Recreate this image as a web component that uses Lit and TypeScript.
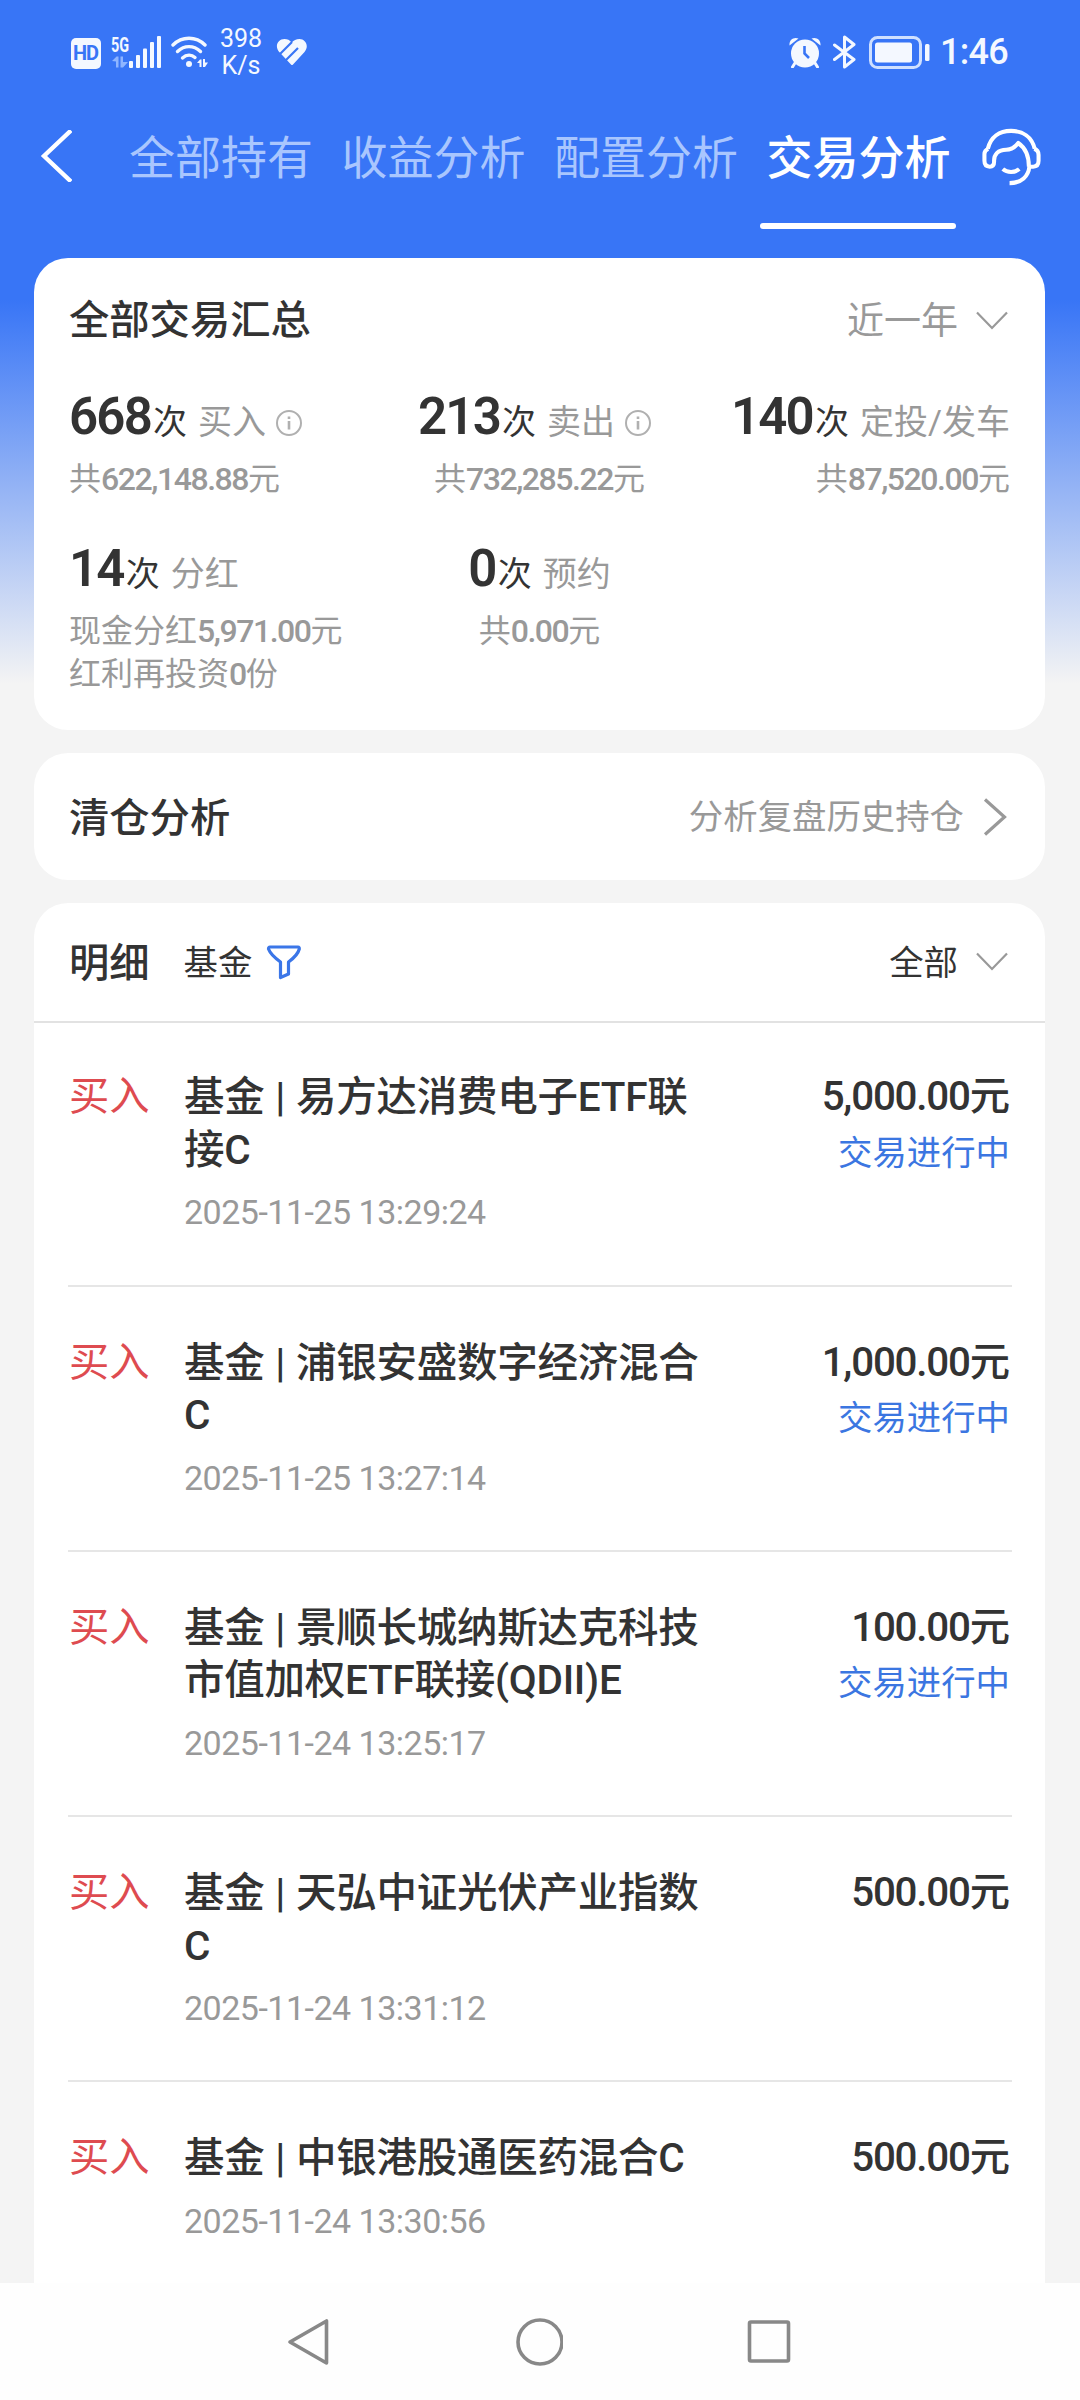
import { LitElement, html, svg, css, nothing } from "lit";
import { customElement, property } from "lit/decorators.js";

const SANS = css`Roboto, "Noto Sans CJK SC", sans-serif`;

interface Stat {
  count: string;
  label: string;
  info?: boolean;
  lines: string[][];
}

interface Trade {
  name: string;
  time: string;
  amount: string;
  pending: boolean;
}

const STATS: Stat[] = [
  { count: "668", label: "买入", info: true, lines: [["共", "622,148.88", "元"]] },
  { count: "213", label: "卖出", info: true, lines: [["共", "732,285.22", "元"]] },
  { count: "140", label: "定投/发车", lines: [["共", "87,520.00", "元"]] },
  {
    count: "14",
    label: "分红",
    lines: [
      ["现金分红", "5,971.00", "元"],
      ["红利再投资", "0", "份"],
    ],
  },
  { count: "0", label: "预约", lines: [["共", "0.00", "元"]] },
];

const TRADES: Trade[] = [
  { name: "基金 | 易方达消费电子ETF联接C", time: "2025-11-25 13:29:24", amount: "5,000.00", pending: true },
  { name: "基金 | 浦银安盛数字经济混合C", time: "2025-11-25 13:27:14", amount: "1,000.00", pending: true },
  { name: "基金 | 景顺长城纳斯达克科技市值加权ETF联接(QDII)E", time: "2025-11-24 13:25:17", amount: "100.00", pending: true },
  { name: "基金 | 天弘中证光伏产业指数C", time: "2025-11-24 13:31:12", amount: "500.00", pending: false },
  { name: "基金 | 中银港股通医药混合C", time: "2025-11-24 13:30:56", amount: "500.00", pending: false },
];

const chevronDown = html`<svg width="32" height="20" viewBox="0 0 32 20" fill="none" stroke="#999" stroke-width="2.2">
  <path d="M1 1.5 L16 17 L31 1.5" />
</svg>`;

@customElement("status-bar")
class StatusBar extends LitElement {
  static styles = css`
    :host {
      display: flex;
      flex: none;
      align-items: center;
      height: 104px;
      padding: 0 72px 0 71px;
      box-sizing: border-box;
      color: #f4f8ff;
      font-family: ${SANS};
    }
    svg {
      display: block;
      flex: none;
    }
    .hd {
      width: 30px;
      height: 31px;
      margin-top: 2px;
      border-radius: 5px;
      background: #f4f8ff;
      color: #3875f6;
      font-size: 20px;
      font-weight: 700;
      line-height: 31px;
      text-align: center;
      letter-spacing: -1px;
      text-indent: -1px;
    }
    .cell {
      display: flex;
      align-items: flex-end;
      margin-left: 10px;
    }
    .net {
      width: 18px;
      height: 32px;
    }
    .gen {
      width: 26px;
      height: 20px;
      font-size: 20px;
      line-height: 18px;
      font-weight: 700;
      transform: scaleX(0.72);
      transform-origin: left center;
    }
    .wifi {
      margin-left: 10px;
    }
    .speed {
      width: 46px;
      margin-left: 9px;
      font-size: 25px;
      line-height: 27px;
      text-align: center;
    }
    .heart {
      margin-left: 12px;
    }
    .grow {
      flex: 1;
    }
    .bt {
      margin-left: 12px;
    }
    .battery {
      margin-left: 13px;
    }
    .clock {
      margin-left: 10px;
      font-size: 36px;
      line-height: 40px;
      font-weight: 500;
      letter-spacing: -0.7px;
    }
  `;

  render() {
    return html`
      <div class="hd">HD</div>
      <div class="cell">
        <div class="net">
          <div class="gen">5G</div>
          <svg width="18" height="12" viewBox="0 0 18 12" fill="#8fb5ff">
            <path d="M1 5 L5.5 0.5 H7.5 V11.5 H5 V5.5 Z M9.5 0.5 H12 V6 H17 L12 11.5 H9.5 Z" />
          </svg>
        </div>
        <svg width="32" height="32" viewBox="0 0 32 32" fill="currentColor">
          <rect x="0" y="25" width="4" height="7" rx="1" />
          <rect x="7" y="19" width="4" height="13" rx="1" />
          <rect x="14" y="12.5" width="4" height="19.5" rx="1" />
          <rect x="21" y="6" width="4" height="26" rx="1" />
          <rect x="28" y="0" width="4" height="32" rx="1" />
        </svg>
      </div>
      <svg class="wifi" width="38" height="32" viewBox="0 0 38 32" fill="none" stroke="currentColor" stroke-width="3.4" stroke-linecap="round">
        <path d="M2 9 C11 0 25 0 34 9" />
        <path d="M6.5 15.5 C13.5 9 22.5 9 29.5 15.5" />
        <path d="M11.5 22 C15.5 18.5 20.5 18.5 24 21.5" />
        <circle cx="18" cy="28" r="3" fill="currentColor" stroke="none" />
        <path d="M26 27 L29 23.5 H30.5 V31 H28.5 V27 Z M32 23 H34 V26.5 H37 L34 31 H32 Z" fill="currentColor" stroke="none" />
      </svg>
      <div class="speed">398<br />K/s</div>
      <svg class="heart" width="32" height="28" viewBox="0 0 32 28" fill="currentColor">
        <path d="M15 26.5 Q16 27.5 17 26.5 L28.5 14 C33.5 8 29.5 1 23.5 1 C20 1 17.8 2.5 15.8 4.5 C13.5 2 11.5 1 8.5 1 C2 1 -1.5 8 2.8 13.5 Z" />
        <path d="M3 17 L16 4 M9.5 22.5 L22 10" fill="none" stroke="#3875f6" stroke-width="2.2" />
      </svg>
      <div class="grow"></div>
      <svg width="32" height="31" viewBox="0 0 32 31" fill="currentColor">
        <circle cx="16" cy="16.5" r="14" />
        <path d="M0.5 8.5 C0 3 4.5 -0.5 9.5 1.5 Z M31.5 8.5 C32 3 27.5 -0.5 22.5 1.5 Z" />
        <path d="M6 26 L3.5 30 M26 26 L28.5 30" stroke="currentColor" stroke-width="3" stroke-linecap="round" />
        <path d="M15.5 9 V16.5 L20 21" fill="none" stroke="#3875f6" stroke-width="2.6" />
      </svg>
      <svg class="bt" width="23" height="34" viewBox="0 0 23 34" fill="none" stroke="currentColor" stroke-width="3" stroke-linejoin="round" stroke-linecap="round">
        <path d="M1.5 10 L21 24.5 L11.5 32 V2 L21 9.5 L1.5 24.5" />
      </svg>
      <svg class="battery" width="61" height="33" viewBox="0 0 61 33">
        <rect x="1.5" y="1.5" width="50" height="30" rx="7" fill="none" stroke="#cfe0ff" stroke-width="3" />
        <rect x="6" y="6.5" width="37" height="20" rx="2.5" fill="currentColor" />
        <rect x="56" y="8" width="4.5" height="17" rx="1.5" fill="currentColor" />
      </svg>
      <div class="clock">1:46</div>
    `;
  }
}

@customElement("tab-header")
class TabHeader extends LitElement {
  static styles = css`
    :host {
      display: flex;
      flex: none;
      align-items: flex-start;
      height: 154px;
      padding: 0 38px 0 40px;
      box-sizing: border-box;
      font-family: ${SANS};
    }
    svg {
      display: block;
      flex: none;
    }
    .back {
      margin-top: 26px;
    }
    .tabs {
      display: flex;
      flex: 1;
      min-width: 0;
      gap: 16.5px;
      margin-left: 50px;
    }
    .tab {
      flex: none;
      width: 196px;
      height: 125px;
      box-sizing: border-box;
      padding-top: 1px;
      font-size: 46px;
      line-height: 106px;
      text-align: center;
      text-indent: 2px;
      color: #a9c6fe;
      white-space: nowrap;
    }
    .active {
      color: #fff;
      font-weight: 500;
    }
    .active::after {
      content: "";
      display: block;
      height: 6px;
      margin-top: 12px;
      border-radius: 3px;
      background: #fff;
    }
    .help {
      margin-top: 24px;
    }
  `;

  render() {
    return html`
      <svg class="back" width="32" height="52" viewBox="0 0 32 52" fill="none" stroke="#fff" stroke-width="4.4">
        <path d="M31 0.5 L4 26 L31 51.5" />
      </svg>
      <div class="tabs">
        ${["全部持有", "收益分析", "配置分析"].map((t) => html`<div class="tab">${t}</div>`)}
        <div class="tab active">交易分析</div>
      </div>
      <svg class="help" width="61" height="58" viewBox="0 0 61 60" fill="none" stroke="#fff" stroke-width="4.2" stroke-linejoin="round">
        <path d="M6 21.5 C9 9 18 3 30 3 C42 3 51.5 9 54.5 21.5" />
        <path d="M6.5 21.5 Q2.5 23 2.5 27 V34 Q2.5 40 8 40 Q12.5 40 12.5 35 C12 27 17 22.5 25 22.5 C31 22.5 34 20 37.5 15.5 C44 20 48.5 27 48.5 40" />
        <path d="M54 21.5 Q58.5 23 58.5 28 V34 Q58.5 40 53 40 H49 C48 50 41 57 28.5 57" />
        <path d="M21.5 42.5 C26 46.5 34 46.5 38.5 42.5" />
      </svg>
    `;
  }
}

@customElement("trade-summary")
class TradeSummary extends LitElement {
  static styles = css`
    :host {
      display: block;
      flex: none;
      height: 472px;
      padding: 36px 35px 0;
      box-sizing: border-box;
      background: #fff;
      border-radius: 34px;
      font-family: ${SANS};
      color: #333;
    }
    .head {
      display: flex;
      align-items: center;
      justify-content: space-between;
      height: 56px;
      margin-right: 2px;
    }
    .title {
      font-size: 40.3px;
      line-height: 54px;
      margin-bottom: 2px;
      font-weight: 500;
    }
    .range {
      display: flex;
      align-items: center;
      gap: 18px;
      font-size: 37px;
      line-height: 54px;
      color: #999;
    }
    .range svg {
      margin-bottom: 2px;
    }
    .grid {
      display: grid;
      grid-template-columns: repeat(3, 1fr);
      grid-template-rows: 152px auto;
      margin-top: 34px;
    }
    .stat {
      display: flex;
      flex-direction: column;
      white-space: nowrap;
    }
    .stat:nth-child(3n + 2) {
      align-items: center;
    }
    .stat:nth-child(3n) {
      align-items: flex-end;
    }
    .top {
      display: flex;
      align-items: baseline;
      height: 74px;
      line-height: 66px;
      font-size: 34px;
    }
    .count {
      margin-right: 2px;
      font-size: 51px;
      font-weight: 600;
      letter-spacing: -1.8px;
    }
    .label {
      margin-left: 11px;
      color: #999;
    }
    .info {
      align-self: flex-start;
      margin: 25px 9px 0 9px;
    }
    .line {
      font-size: 32px;
      line-height: 43px;
      color: #999;
    }
    .num {
      font-weight: 500;
      letter-spacing: -1.45px;
    }
  `;

  render() {
    return html`
      <div class="head">
        <div class="title">全部交易汇总</div>
        <div class="range">近一年 ${chevronDown}</div>
      </div>
      <div class="grid">
        ${STATS.map(
          (s) => html`<div class="stat">
            <div class="top">
              <span class="count">${s.count}</span><span>次</span><span class="label">${s.label}</span>
              ${s.info
                ? html`<svg class="info" width="28" height="28" viewBox="0 0 28 28" fill="none" stroke="#b0b0b0" stroke-width="2">
                    <circle cx="14" cy="14" r="12" />
                    <path d="M14 12 V20.5 M14 7.5 V10" stroke-width="2.6" />
                  </svg>`
                : nothing}
            </div>
            ${s.lines.map(([a, n, b]) => html`<div class="line">${a}<span class="num">${n}</span>${b}</div>`)}
          </div>`
        )}
      </div>
    `;
  }
}

@customElement("trade-row")
class TradeRow extends LitElement {
  @property({ attribute: false }) trade!: Trade;

  static styles = css`
    :host {
      display: flex;
      box-sizing: border-box;
      font-family: ${SANS};
      font-size: 40.3px;
      line-height: 52.5px;
      color: #333;
    }
    .side {
      width: 115px;
      color: #de4b50;
    }
    .main {
      width: 522px;
    }
    .name {
      font-size: 40.5px;
      font-weight: 500;
      letter-spacing: -0.25px;
      word-spacing: 1px;
    }
    .time {
      margin-top: 10px;
      font-size: 34px;
      letter-spacing: -0.5px;
      color: #999;
    }
    .result {
      flex: 1;
      text-align: right;
      white-space: nowrap;
    }
    .amount {
      font-weight: 500;
    }
    .num {
      letter-spacing: -1.2px;
    }
    .state {
      font-size: 34.4px;
      line-height: 58px;
      color: #3b76e1;
    }
  `;

  render() {
    const t = this.trade;
    return html`
      <div class="side">买入</div>
      <div class="main">
        <div class="name">${t.name}</div>
        <div class="time">${t.time}</div>
      </div>
      <div class="result">
        <div class="amount"><span class="num">${t.amount}</span>元</div>
        ${t.pending ? html`<div class="state">交易进行中</div>` : nothing}
      </div>
    `;
  }
}

@customElement("nav-bar")
class NavBar extends LitElement {
  static styles = css`
    :host {
      display: flex;
      flex: none;
      align-items: center;
      justify-content: center;
      gap: 182px;
      height: 117px;
      padding-right: 2px;
      box-sizing: border-box;
      background: #fefefe;
    }
    svg {
      display: block;
    }
  `;

  render() {
    const shapes = [
      svg`<path d="M41.5 3 V45 L5 24 Z" />`,
      svg`<circle cx="25" cy="24" r="22" />`,
      svg`<rect x="4.5" y="4" width="39" height="39" rx="1.5" />`,
    ];
    return shapes.map(
      (s) => html`<svg width="48" height="48" viewBox="0 0 48 48" fill="none" stroke="#888" stroke-width="3.6" stroke-linejoin="round">${s}</svg>`
    );
  }
}

@customElement("app-root")
class AppRoot extends LitElement {
  static styles = css`
    :host {
      display: flex;
      flex-direction: column;
      width: 1080px;
      height: 2400px;
      overflow: hidden;
      background: linear-gradient(180deg, #3875f6 0, #3875f6 300px, #f4f4f4 684px);
      font-family: ${SANS};
      color: #333;
    }
    svg {
      display: block;
    }
    .content {
      display: flex;
      flex-direction: column;
      flex: 1;
      gap: 23px;
      min-height: 0;
      padding: 0 35px 0 34px;
    }
    .row {
      display: flex;
      align-items: center;
      padding: 0 37px 0 35px;
      box-sizing: border-box;
    }
    .row div {
      padding-bottom: 5px;
    }
    .clear {
      flex: none;
      height: 127px;
      background: #fff;
      border-radius: 34px;
    }
    .title {
      font-size: 40.3px;
      font-weight: 500;
    }
    .hint {
      margin-left: auto;
      margin-right: 19px;
      font-size: 34.4px;
      color: #999;
    }
    .details {
      flex: 1 1 0;
      min-height: 0;
      overflow: hidden;
      background: #fff;
      border-radius: 34px 34px 0 0;
    }
    .bar {
      height: 120px;
      border-bottom: 2px solid #e2e2e2;
      font-size: 34.4px;
    }
    .kind {
      margin-left: 34px;
      margin-right: 14px;
    }
    .all {
      margin-left: auto;
      margin-right: 18px;
    }
    .list {
      padding: 0 33px 0 34px;
    }
    trade-row {
      height: 265.3px;
      padding: 50px 2px 0 1px;
      border-top: 2px solid #e6e6e6;
    }
    trade-row:first-child {
      height: 261.5px;
      padding-top: 48px;
      border-top: 0;
    }
  `;

  render() {
    return html`
      <status-bar></status-bar>
      <tab-header></tab-header>
      <div class="content">
        <trade-summary></trade-summary>
        <div class="row clear">
          <div class="title">清仓分析</div>
          <div class="hint">分析复盘历史持仓</div>
          <svg width="25" height="38" viewBox="0 0 25 38" fill="none" stroke="#999" stroke-width="3.2">
            <path d="M2 1.5 L21.5 19 L2 36.5" />
          </svg>
        </div>
        <div class="details">
          <div class="row bar">
            <div class="title">明细</div>
            <div class="kind">基金</div>
            <svg width="36" height="36" viewBox="0 0 36 36" fill="none" stroke="#3b76e8" stroke-width="3.2" stroke-linejoin="round">
              <path d="M4 3 H32 Q33.5 3 33.3 5 C32 10 28 14 22.5 18 V30 L14.5 33.5 V18 C9 14 4 9 2.5 5 Q2.5 3 4 3 Z" />
            </svg>
            <div class="all">全部</div>
            ${chevronDown}
          </div>
          <div class="list">${TRADES.map((t) => html`<trade-row .trade=${t}></trade-row>`)}</div>
        </div>
      </div>
      <nav-bar></nav-bar>
    `;
  }
}
